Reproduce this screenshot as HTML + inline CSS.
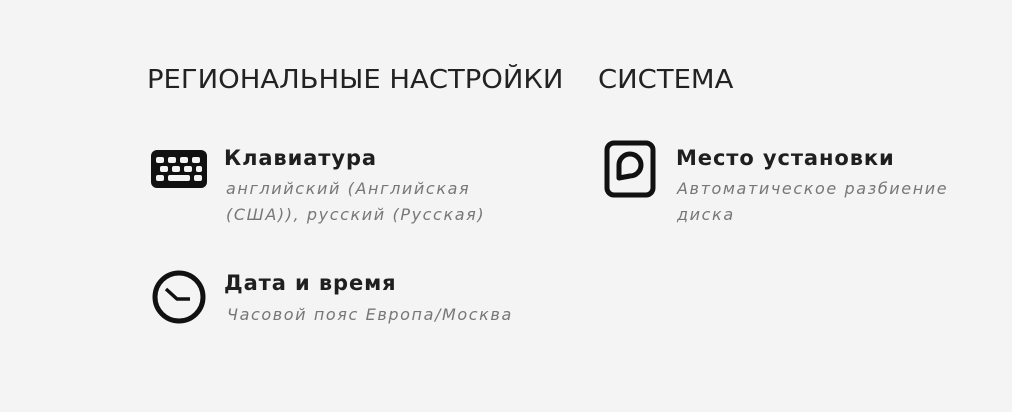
<!DOCTYPE html>
<html><head><meta charset="utf-8"><style>
body{margin:0;width:1012px;height:412px;background:#f4f4f4;font-family:"DejaVu Sans","Liberation Sans",sans-serif;color:#1a1a1a;position:relative;overflow:hidden}
.h{position:absolute;top:65px;font-size:26px;color:#222;transform:scaleX(1.055);transform-origin:left top;white-space:nowrap}
.t{position:absolute;font-size:21px;font-weight:bold;letter-spacing:0.9px;color:#1f1f1f;white-space:nowrap}
.s{position:absolute;font-size:16px;font-style:italic;color:#777;line-height:26px;letter-spacing:1.6px;white-space:nowrap}
svg{position:absolute}
</style></head><body>
<div class="h" style="left:147px">РЕГИОНАЛЬНЫЕ НАСТРОЙКИ</div>
<div class="h" style="left:598px">СИСТЕМА</div>

<svg style="left:150px;top:149px" width="58" height="40" viewBox="0 0 58 40">
<rect x="1" y="1" width="56" height="38" rx="6" fill="#111"/>
<g fill="#f4f4f4">
<rect x="6" y="8" width="8" height="6" rx="2"/><rect x="18" y="8" width="8" height="6" rx="2"/><rect x="30" y="8" width="8" height="6" rx="2"/><rect x="42" y="8" width="8" height="6" rx="2"/>
<rect x="10" y="17" width="8" height="6" rx="2"/><rect x="22" y="17" width="8" height="6" rx="2"/><rect x="34" y="17" width="8" height="6" rx="2"/><rect x="46" y="17" width="6" height="6" rx="2"/>
<rect x="6" y="26" width="8" height="6" rx="2"/><rect x="18" y="26" width="22" height="6" rx="2"/><rect x="44" y="26" width="8" height="6" rx="2"/>
</g></svg>
<div class="t" style="left:224px;top:146px">Клавиатура</div>
<div class="s" style="left:226px;top:176px">английский (Английская<br>(США)), русский (Русская)</div>

<svg style="left:150px;top:268px" width="58" height="58" viewBox="0 0 58 58">
<circle cx="29" cy="29" r="24" fill="none" stroke="#111" stroke-width="5"/>
<path d="M16 21 L27 31 L40 31" fill="none" stroke="#111" stroke-width="3.5" stroke-linejoin="round"/>
</svg>
<div class="t" style="left:224px;top:271px">Дата и время</div>
<div class="s" style="left:227px;top:302px">Часовой пояс Европа/Москва</div>

<svg style="left:604px;top:140px" width="52" height="58" viewBox="0 0 52 58">
<rect x="3" y="3" width="46" height="52" rx="7" fill="none" stroke="#111" stroke-width="5"/>
<path d="M15 38 L15 25 A11 11 0 1 1 26 36 Z" fill="none" stroke="#111" stroke-width="5" stroke-linejoin="round"/>
</svg>
<div class="t" style="left:676px;top:146px">Место установки</div>
<div class="s" style="left:677px;top:176px">Автоматическое разбиение<br>диска</div>
</body></html>
